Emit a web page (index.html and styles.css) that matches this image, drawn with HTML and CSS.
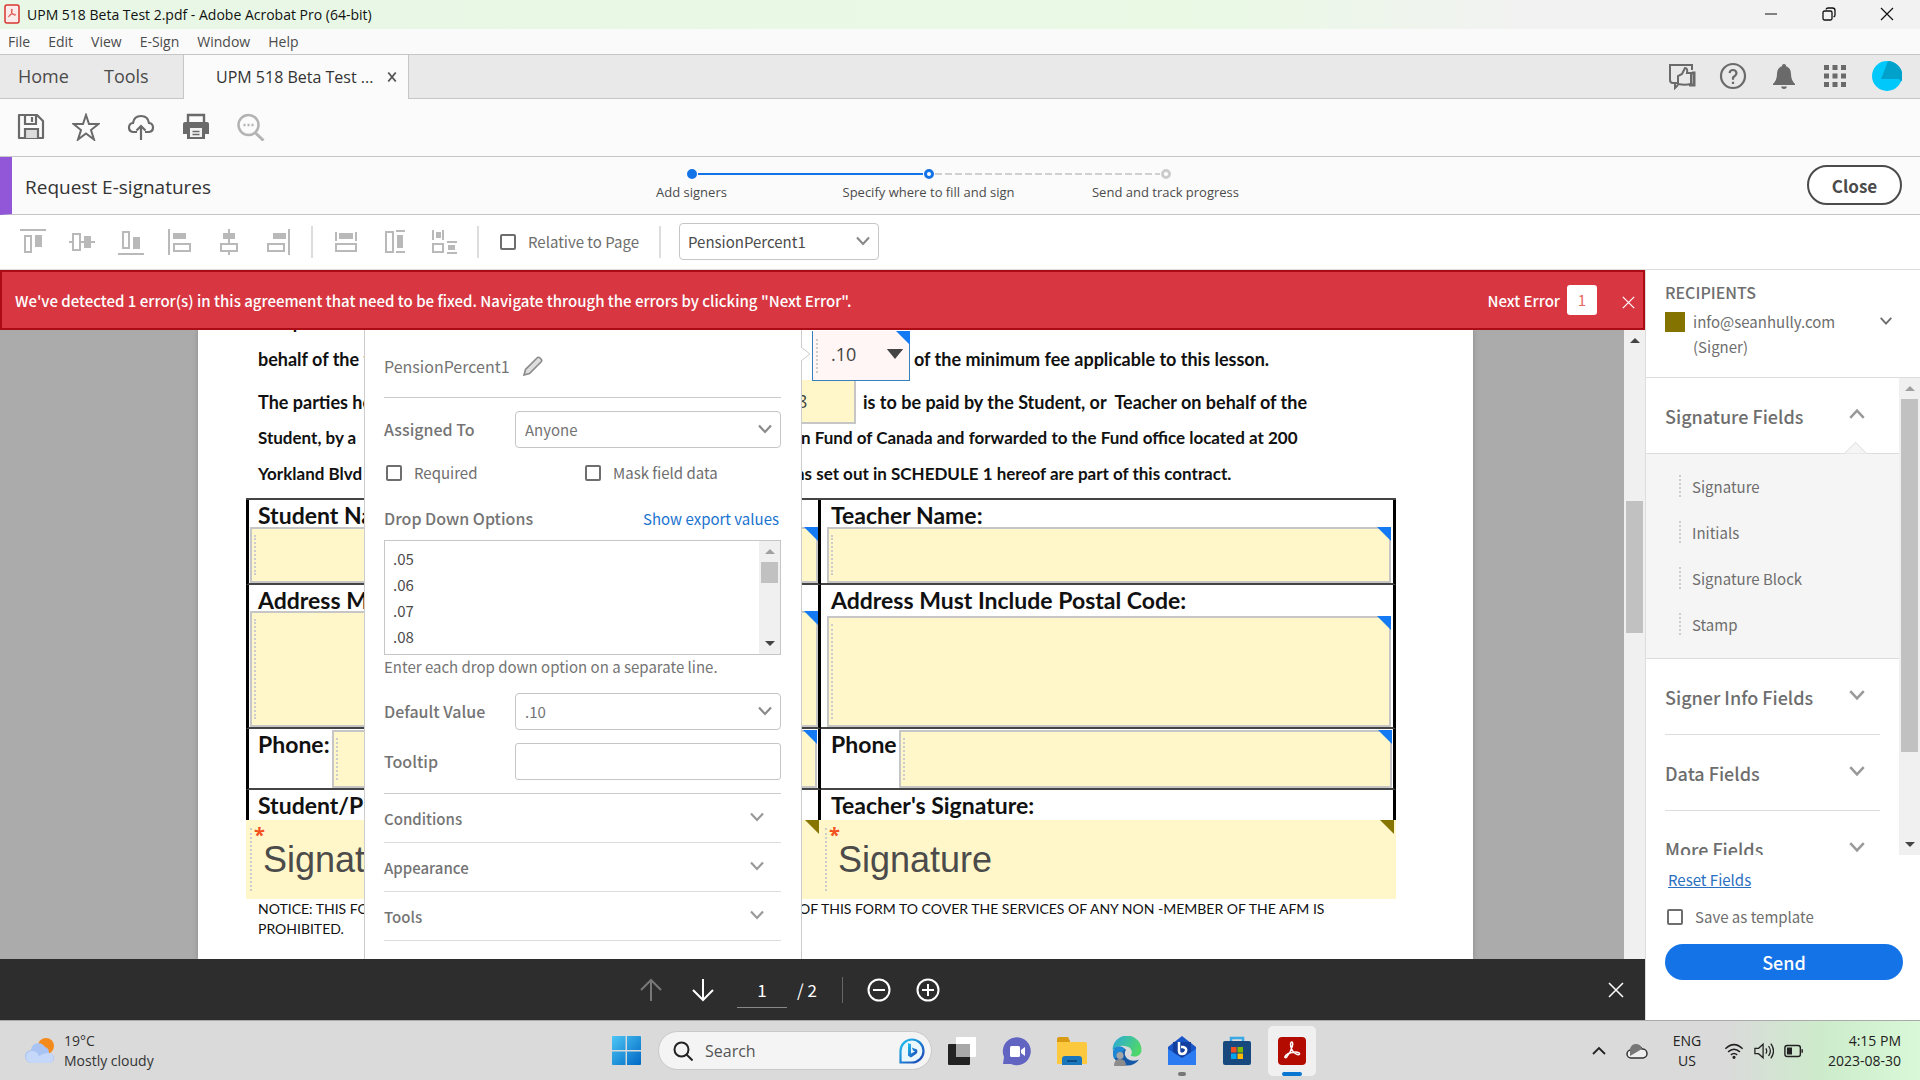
FILE: index.html
```html
<!DOCTYPE html>
<html lang="en">
<head>
<meta charset="utf-8">
<title>UPM 518 Beta Test 2.pdf - Adobe Acrobat Pro (64-bit)</title>
<link rel="stylesheet" href="styles.css">
</head>
<body>
<svg class="defs" aria-hidden="true">
  <symbol id="chev" viewBox="0 0 16 16"><path d="M2 4.500l6 6.500 6-6.500" fill="none" stroke="currentColor" stroke-width="2.200"/></symbol>
  <symbol id="cross" viewBox="0 0 16 16"><path d="M1 1l14 14M15 1L1 15" fill="none" stroke="currentColor" stroke-width="1.500"/></symbol>
  <symbol id="trefoil" viewBox="0 0 20 20"><path d="M3 16.500c1-2 3.500-3.300 6.500-4 3-.7 6-.6 7.500.3 1.200.9.200 2.200-1.700 1.700-2.800-.8-5.800-4.300-6.600-8.500-.4-2.600.2-4.200 1.100-4s1.300 1.800.5 4.400C9.300 10 7 14.300 4.700 17c-1 1.100-2.300.8-1.700-.5z" fill="none" stroke="currentColor" stroke-width="1.500"/></symbol>
</svg>

<header class="titlebar">
  <svg class="app-icon" viewBox="0 0 16 20"><rect x="1" y="1" width="14" height="18" rx="2" fill="#fbeceb" stroke="#d8362f" stroke-width="1.500"/><g color="#d8362f"><use href="#trefoil" x="3" y="4" width="10" height="10"/></g></svg>
  <h1>UPM 518 Beta Test 2.pdf - Adobe Acrobat Pro (64-bit)</h1>
  <div class="win-controls">
    <button aria-label="Minimize"><svg viewBox="0 0 14 14"><path d="M1 7h12" stroke="#111"/></svg></button>
    <button aria-label="Restore"><svg viewBox="0 0 14 14" fill="none" stroke="#111" stroke-width="1.300"><rect x="1" y="4" width="9" height="9" rx="1.500"/><path d="M4 2.500Q4.500 1 6 1h4.500Q13 1 13 3.500V8q0 1.500-1.500 2"/></svg></button>
    <button aria-label="Close window"><svg viewBox="0 0 14 14"><path d="M1 1l12 12M13 1L1 13" stroke="#111" stroke-width="1.200"/></svg></button>
  </div>
</header>

<nav class="menubar" aria-label="Menu">
  <a href="#">File</a><a href="#">Edit</a><a href="#">View</a><a href="#">E-Sign</a><a href="#">Window</a><a href="#">Help</a>
</nav>

<div class="tabs">
  <a class="tab-home" href="#">Home</a>
  <a class="tab-tools" href="#">Tools</a>
  <div class="tab-doc"><span>UPM 518 Beta Test ...</span><button aria-label="Close tab"><svg viewBox="0 0 16 16"><path d="M3 2l10 12M13 2L3 14" stroke="#555" stroke-width="2.500"/></svg></button></div>
  <div class="tab-icons">
    <button aria-label="Feedback"><svg viewBox="0 0 28 28" fill="none" stroke="#6a6a6a" stroke-width="2"><path d="M9 21H5q-3 0-3-3V3h22v5M7 21v5l3-3"/><path d="M10 22V14l4-2 3-6q3 0 2 5h4v11q-6 1.500-13 0z"/><path d="M24 11h2v12h-5" stroke-width="3"/></svg></button>
    <button aria-label="Help"><svg viewBox="0 0 28 28" fill="none" stroke="#6a6a6a" stroke-width="2.200"><circle cx="14" cy="14" r="12"/><path d="M10.500 11q.5-3 3.500-3t3.500 3q0 2-2 3.200T14 17v.8M14 19.800v2.200"/></svg></button>
    <button aria-label="Notifications"><svg viewBox="0 0 28 28" fill="#6a6a6a"><path d="M14 2q2 0 2.200 2.200Q21 6 21 12q0 6 4 10v1H3v-1q4-4 4-10 0-6 4.800-7.800Q12 2 14 2zM11 24.500h6q-.5 2.500-3 2.500t-3-2.500z"/></svg></button>
    <button aria-label="Apps"><svg viewBox="0 0 28 28" fill="#6a6a6a"><path d="M3 3h5v5H3zM11.500 3h5v5h-5zM20 3h5v5h-5zM3 11.500h5v5H3zM11.500 11.500h5v5h-5zM20 11.500h5v5h-5zM3 20h5v5H3zM11.500 20h5v5h-5zM20 20h5v5h-5z"/></svg></button>
    <button aria-label="Account"><svg class="avatar" viewBox="0 0 30 30"><circle cx="15" cy="15" r="15" fill="#00c8fa"/><path d="M16 0A15 15 0 0 1 29.500 20.500L27 18H9z" fill="#00a2cc"/></svg></button>
  </div>
</div>

<div class="toolbar">
  <button aria-label="Save"><svg viewBox="0 0 28 28" fill="none" stroke="#6a6a6a" stroke-width="2.200"><path d="M2 2h18l6 6v17H2z" stroke-linejoin="round"/><path d="M8 2v9h11V2M15 4v5"/><path d="M8 25v-9h13v9" fill="#dcdcdc"/></svg></button>
  <button aria-label="Star"><svg viewBox="0 0 28 28" fill="none" stroke="#6a6a6a" stroke-width="2"><path d="M14 2l3 9h9.500l-7.500 6 3 9.500-8-6-8 6 3-9.500-7.500-6H11z"/></svg></button>
  <button aria-label="Upload"><svg viewBox="0 0 28 28" fill="none" stroke="#6a6a6a" stroke-width="2.200"><path d="M10 19H6q-4-.5-4-4.500T6 10q1-7 8-7t8 7q4 .5 4 4.500T22 19h-4M14 27V13M9.500 17.500L14 13l4.500 4.500"/></svg></button>
  <button aria-label="Print"><svg viewBox="0 0 28 28" fill="#6a6a6a"><path d="M6 9V2h16v7" fill="none" stroke="#6a6a6a" stroke-width="2.400"/><path d="M3 9h22q2 0 2 2v10h-4v5H5v-5H1V11q0-2 2-2z"/><path d="M8 15h12v9H8z" fill="#f3f3f3"/><path d="M10.500 18.500h7M10.500 21.500h7" stroke="#6a6a6a" stroke-width="1.500"/></svg></button>
  <button aria-label="Find"><svg viewBox="0 0 28 28" fill="none" stroke="#b3b3b3" stroke-width="2.500"><circle cx="11.500" cy="12" r="10"/><path d="M18.500 20l8 7.500" stroke-width="3"/><path d="M6.500 12h2M10.500 12h2M14.500 12h2"/></svg></button>
</div>

<div class="request">
  <h2>Request E-signatures</h2>
  <ol class="steps">
    <li class="step done"><i></i><span>Add signers</span></li>
    <li class="step now"><i></i><span>Specify where to fill and sign</span></li>
    <li class="step"><i></i><span>Send and track progress</span></li>
  </ol>
  <button class="close-btn">Close</button>
</div>

<div class="alignbar">
  <div class="align-group">
    <button aria-label="Align top"><svg viewBox="0 0 26 26"><path d="M0 1h26" /><rect x="5" y="7" width="6" height="16"/><rect class="f" x="15" y="6" width="7" height="12"/></svg></button>
    <button aria-label="Align middle"><svg viewBox="0 0 26 26"><path d="M0 13h4M10 13h16"/><rect x="4" y="5" width="7" height="16"/><rect class="f" x="15" y="7" width="7" height="12"/></svg></button>
    <button aria-label="Align bottom"><svg viewBox="0 0 26 26"><path d="M0 25h26"/><rect x="5" y="3" width="6" height="16"/><rect class="f" x="15" y="8" width="7" height="12"/></svg></button>
    <button aria-label="Align left"><svg viewBox="0 0 26 26"><path d="M2 0v26"/><rect class="f" x="6" y="4" width="13" height="6"/><rect x="7" y="15" width="16" height="7"/></svg></button>
    <button aria-label="Align center"><svg viewBox="0 0 26 26"><path d="M13 0v15M13 22v4"/><rect class="f" x="7" y="4" width="12" height="6"/><rect x="5" y="15" width="16" height="7"/></svg></button>
    <button aria-label="Align right"><svg viewBox="0 0 26 26"><path d="M24 0v26"/><rect class="f" x="8" y="4" width="13" height="6"/><rect x="3" y="15" width="16" height="7"/></svg></button>
  </div>
  <div class="align-group">
    <button aria-label="Match width"><svg viewBox="0 0 26 26"><path d="M3 3v9M23 3v9"/><rect class="f" x="6" y="4" width="14" height="6"/><rect x="3" y="15" width="20" height="7"/></svg></button>
    <button aria-label="Match height"><svg viewBox="0 0 26 26"><rect x="4" y="3" width="7" height="20"/><rect class="f" x="15" y="6" width="6" height="13"/><path d="M14 2h9M14 23h9"/></svg></button>
    <button aria-label="Match both"><svg viewBox="0 0 26 26"><path d="M2 1v10M12 1v10M16 13h10M16 24h10"/><rect class="f" x="5" y="3" width="5" height="6"/><rect x="2" y="15" width="10" height="8"/><rect class="f" x="17" y="16" width="7" height="5"/></svg></button>
  </div>
  <label class="check relative"><input type="checkbox"><span>Relative to Page</span></label>
  <div class="select field-select"><select aria-label="Field"><option>PensionPercent1</option></select><svg><use href="#chev"/></svg></div>
</div>

<div class="workspace">
  <main>
    <div class="error" role="alert">
      <span>We've detected 1 error(s) in this agreement that need to be fixed. Navigate through the errors by clicking "Next Error".</span>
      <button class="next">Next Error <b>1</b></button>
      <button class="dismiss" aria-label="Dismiss"><svg><use href="#cross"/></svg></button>
    </div>

    <div class="viewer">
      <section class="page">
        <div class="line l0">The p</div>
        <div class="line l1"><span class="lead">behalf of the t</span>
          <div class="pdf-select"><select aria-label="Pension percent"><option>.10</option></select><svg viewBox="0 0 18 11"><path d="M0 0h18l-9 11z" fill="#444"/></svg></div>
          <span>of the minimum fee applicable to this lesson.</span></div>
        <div class="line l2"><span class="lead">The parties he</span><input class="pdf-input amount" aria-label="Amount" value="8"><span>is to be paid by the Student, or &nbsp;Teacher on behalf of the</span></div>
        <div class="line l3"><span class="lead">Student, by a</span><span>n Fund of Canada and forwarded to the Fund office located at 200</span></div>
        <div class="line l4"><span class="lead">Yorkland Blvd</span><span>ns set out in SCHEDULE 1 hereof are part of this contract.</span></div>

        <div class="form">
          <div class="cell name"><label for="sn">Student Na</label><div class="fld"><input id="sn"></div></div>
          <div class="cell name"><label for="tn">Teacher Name:</label><div class="fld"><input id="tn"></div></div>
          <div class="cell addr"><label for="sa">Address M</label><div class="fld"><input id="sa"></div></div>
          <div class="cell addr"><label for="ta">Address Must Include Postal Code:</label><div class="fld"><input id="ta"></div></div>
          <div class="cell phone"><label for="sp">Phone:</label><div class="fld"><input id="sp"></div></div>
          <div class="cell phone"><label for="tp">Phone</label><div class="fld"><input id="tp"></div></div>
          <div class="cell sig"><label for="ss">Student/P</label></div>
          <div class="cell sig"><label for="ts">Teacher's Signature:</label></div>
          <div class="sigfield"><span class="star">*</span><button id="ss">Signature</button></div>
          <div class="sigfield"><span class="star">*</span><button id="ts">Signature</button></div>
        </div>
        <div class="notice"><span>NOTICE: THIS FO</span><span>OF THIS FORM TO COVER THE SERVICES OF ANY NON -MEMBER OF THE AFM IS</span></div>
        <div class="notice"><span>PROHIBITED.</span></div>
      </section>

      <form class="popup">
        <svg class="pointer" viewBox="0 0 10 16"><path d="M0 1l9 7-9 7" fill="#fff" stroke="#ccc"/></svg>
        <div class="pop-head"><span>PensionPercent1</span><button type="button" aria-label="Rename"><svg viewBox="0 0 20 20" fill="#ddd" stroke="#8a8a8a" stroke-width="1.600"><path d="M1 19l1.500-5.500L14 2q1.500-1.500 3 0l1 1q1.500 1.500 0 3L6.500 17.500z"/></svg></button></div>
        <div class="row"><label for="assign">Assigned To</label><div class="select"><select id="assign"><option>Anyone</option></select><svg><use href="#chev"/></svg></div></div>
        <div class="checks"><label class="check"><input type="checkbox"><span>Required</span></label><label class="check"><input type="checkbox"><span>Mask field data</span></label></div>
        <div class="opt-head"><label for="opts">Drop Down Options</label><a href="#">Show export values</a></div>
        <div class="options">
          <textarea id="opts">.05
.06
.07
.08</textarea>
          <div class="vscroll off-up"><i class="up"></i><i class="thumb"></i><i class="down"></i></div>
        </div>
        <p class="hint">Enter each drop down option on a separate line.</p>
        <div class="row second"><label for="def">Default Value</label><div class="select"><select id="def"><option>.10</option></select><svg><use href="#chev"/></svg></div></div>
        <div class="row last"><label for="tip">Tooltip</label><input id="tip" type="text"></div>
        <button type="button" class="acc">Conditions<svg><use href="#chev"/></svg></button>
        <button type="button" class="acc">Appearance<svg><use href="#chev"/></svg></button>
        <button type="button" class="acc">Tools<svg><use href="#chev"/></svg></button>
      </form>
      <div class="vscroll doc-scroll"><i class="up"></i><i class="thumb"></i></div>
    </div>

    <div class="pager">
      <div class="pager-tools">
        <button aria-label="Previous page"><svg viewBox="0 0 24 24" fill="none" stroke="#777" stroke-width="2"><path d="M12 23V2M2 12L12 2l10 10"/></svg></button>
        <button aria-label="Next page"><svg viewBox="0 0 24 24" fill="none" stroke="#fff" stroke-width="2"><path d="M12 1v21M2 12l10 10 10-10"/></svg></button>
        <input aria-label="Page" value="1"><span>/ 2</span><i class="sep"></i>
        <button aria-label="Zoom out"><svg viewBox="0 0 24 24" fill="none" stroke="#fff" stroke-width="2"><circle cx="12" cy="12" r="10.500"/><path d="M6 12h12"/></svg></button>
        <button aria-label="Zoom in"><svg viewBox="0 0 24 24" fill="none" stroke="#fff" stroke-width="2"><circle cx="12" cy="12" r="10.500"/><path d="M6 12h12M12 6v12"/></svg></button>
      </div>
      <button class="pager-close" aria-label="Close toolbar"><svg><use href="#cross"/></svg></button>
    </div>
  </main>

  <aside>
    <div class="recipients">
      <h3>RECIPIENTS</h3>
      <button class="recipient"><i class="swatch"></i><span>info@seanhully.com<br>(Signer)</span><svg><use href="#chev"/></svg></button>
    </div>
    <div class="panel-scroll">
      <div class="panel">
        <button class="group open">Signature Fields<svg><use href="#chev"/></svg></button>
        <ul class="sub"><li>Signature</li><li>Initials</li><li>Signature Block</li><li>Stamp</li></ul>
        <button class="group">Signer Info Fields<svg><use href="#chev"/></svg></button>
        <button class="group">Data Fields<svg><use href="#chev"/></svg></button>
        <button class="group">More Fields<svg><use href="#chev"/></svg></button>
      </div>
      <div class="vscroll off-up"><i class="up"></i><i class="thumb"></i><i class="down"></i></div>
    </div>
    <div class="actions">
      <a href="#">Reset Fields</a>
      <label class="check"><input type="checkbox"><span>Save as template</span></label>
      <button class="send">Send</button>
    </div>
  </aside>
</div>

<footer class="taskbar">
  <button class="weather"><svg viewBox="0 0 30 26"><circle cx="21" cy="8" r="8" fill="#f58a1c"/><path d="M7 25a6.500 6.500 0 0 1-1-13A7.500 7.500 0 0 1 20 9a6 6 0 0 1 4 6 5 5 0 0 1 0 10z" fill="#a9c3f2"/><path d="M7 25a6 6 0 0 1 0-12q5 0 7 5 4-3 9-3a5 5 0 0 1 1 10z" fill="#c5d8fa"/></svg><span>19°C<br>Mostly cloudy</span></button>
  <div class="apps">
    <button aria-label="Start" class="start"><svg viewBox="0 0 30 30"><defs><linearGradient id="w" x2="1" y2="1"><stop stop-color="#4cc6f5"/><stop offset="1" stop-color="#0067c4"/></linearGradient></defs><path d="M0 1q0-1 1-1h13v14.500H0zM15.500 0H29q1 0 1 1v13.500H15.500zM0 16h14v14H1q-1 0-1-1zM15.500 16H30v13q0 1-1 1H15.500z" fill="url(#w)"/></svg></button>
    <label class="search"><svg viewBox="0 0 20 20" fill="none" stroke="#222" stroke-width="2"><circle cx="8.500" cy="8.500" r="7"/><path d="M13.500 13.500l6 6"/></svg><input type="text" placeholder="Search"><svg class="bing" viewBox="0 0 26 26"><defs><linearGradient id="b" x2="1" y2="1"><stop stop-color="#22c3f0"/><stop offset="1" stop-color="#1d3fb3"/></linearGradient></defs><path d="M1.500 24.500V13a11.500 11.500 0 1 1 11.500 11.500z" fill="#eaf7fd" stroke="url(#b)" stroke-width="2.200"/><path d="M9 5l3 1.200v9.300l4-2-2-1-1.200-3L18 11.500q1 3-1 4.500l-5 3.500-3-1.800z" fill="url(#b)"/></svg></label>
    <div class="pins">
      <button aria-label="Task view"><svg viewBox="0 0 30 30"><rect x="1" y="8" width="22" height="21" rx="1" fill="#222"/><rect x="9" y="1" width="20" height="20" rx="1" fill="#fff"/><path d="M9 8h14v13H9z" fill="#a8a8a8"/></svg></button>
      <button aria-label="Chat"><svg viewBox="0 0 30 30"><path d="M1 28l1-7A14 14 0 1 1 9 28z" fill="#6264c2"/><rect x="8" y="10" width="10" height="11" rx="1.500" fill="#fff"/><path d="M19 14l4-3v9l-4-3z" fill="#fff"/></svg></button>
      <button aria-label="Explorer"><svg viewBox="0 0 30 30"><path d="M0 3q0-2 2-2h9l2 4v4H0z" fill="#d99a14"/><path d="M0 6h28q2 0 2 2v20H0z" fill="#fcc93e"/><path d="M5 23q0-3 3-3h14q3 0 3 3v6H5z" fill="#1a76bd"/><path d="M10 24h10v2H10z" fill="#0d4f85"/></svg></button>
      <button aria-label="Edge"><svg viewBox="0 0 30 30"><defs><linearGradient id="eg" x2="1" y2=".4"><stop stop-color="#2aa8e0"/><stop offset="1" stop-color="#4fd66b"/></linearGradient></defs><path d="M1 15Q1 28 15 29.500q8 0 12-6-7 3-12-1-4-4-1-9-7-4-13 1.500z" fill="#1558a8"/><path d="M0.500 14A14.500 14.500 0 0 1 29.500 14c0 6-7 8-11 5.500 2-2 2-5-1-8Q9 7 .500 14z" fill="url(#eg)"/><path d="M2 12q7-4 11 1-4 4-1 9-8-2-10 1-2-6 0-11z" fill="#1e86d2"/><circle cx="8" cy="19.500" r="3.500" fill="#a5a5a5"/><path d="M2 30q0-7 6-7t6 7z" fill="#8c8c8c"/></svg></button>
      <button aria-label="Mail" class="running"><svg viewBox="0 0 30 30"><path d="M1 11L15 0l14 11v18H1z" fill="#1a55c8"/><path d="M6 6h18v12l-9 6-9-6z" fill="#123f9f"/><path d="M1 13l14 9 14-9v16H1z" fill="#2d7bf0"/><path d="M12 6v9q0 3 3 3t4-3-3-4h-2" fill="none" stroke="#fff" stroke-width="2.500"/></svg></button>
      <button aria-label="Store"><svg viewBox="0 0 30 30"><path d="M9 6V2h12v4" fill="none" stroke="#38a9e6" stroke-width="2.500"/><rect x="1" y="5" width="28" height="24" rx="2" fill="#17497f"/><path d="M9 11h5.500v5.500H9z" fill="#f25022"/><path d="M15.500 11H21v5.500h-5.500z" fill="#7fba00"/><path d="M9 17.500h5.500V23H9z" fill="#00a4ef"/><path d="M15.500 17.500H21V23h-5.500z" fill="#ffb900"/></svg></button>
      <button aria-label="Acrobat" class="active"><svg viewBox="0 0 30 30"><rect x="1" y="1" width="28" height="28" rx="4" fill="#b30b00"/><g color="#fff"><use href="#trefoil" x="5" y="4" width="20" height="20"/></g></svg></button>
    </div>
  </div>
  <div class="tray">
    <svg class="tray-up" viewBox="0 0 16 16"><path d="M2 11l6-6 6 6" fill="none" stroke="#222" stroke-width="1.800"/></svg>
    <svg class="cloud" viewBox="0 0 22 16"><path d="M5 15a4 4 0 0 1 0-8A6 6 0 0 1 16 6a4.500 4.500 0 0 1 1 9z" fill="#eee" stroke="#333" stroke-width="1.500"/><path d="M4 8a6 6 0 0 1 12-2L4 13z" fill="#777"/></svg>
    <span class="lang">ENG<br>US</span>
    <svg class="wifi" viewBox="0 0 22 18" fill="none" stroke="#222" stroke-width="1.600"><path d="M1.500 6.500Q11-2.500 20.500 6.500M4.500 10Q11 4 17.500 10M7.500 13.300q3.500-3 7 0"/><circle cx="11" cy="16" r="1" fill="#222"/></svg>
    <svg class="vol" viewBox="0 0 22 18" fill="none" stroke="#222" stroke-width="1.400"><path d="M1 6h4l5-4.500v15L5 12H1zM13 6q2 3 0 6M16 3.500q4 5.500 0 11M18.500 1q6 8 0 16"/></svg>
    <svg class="bat" viewBox="0 0 22 18" fill="none" stroke="#222" stroke-width="1.600"><rect x="1" y="3" width="17" height="12" rx="2.500"/><path d="M20 7v4"/><path d="M4 6h4v6H4z" fill="#222"/></svg>
    <span class="clock">4:15 PM<br>2023-08-30</span>
  </div>
</footer>
</body>
</html>
```
FILE: styles.css
```css
* { box-sizing: border-box; }
body { margin: 0; min-height: 100vh; display: flex; flex-direction: column; font-family: "Noto Sans CJK SC", "Noto Sans", sans-serif; font-size: 15px; color: #4b4b4b; background: #fff; overflow-x: hidden; }
button { font: inherit; color: inherit; background: none; border: 0; padding: 0; margin: 0; text-align: left; }
input, select, textarea { font: inherit; color: inherit; margin: 0; }
a { color: inherit; text-decoration: none; }
svg { display: block; flex: none; width: 16px; height: 16px; }
i { display: block; }
.defs { position: absolute; width: 0; height: 0; }

/* window chrome */
.titlebar { height: 29px; display: flex; align-items: center; gap: 7px; padding: 0 26px 1px 4px; font-family: "Open Sans", sans-serif; color: #111; background: linear-gradient(90deg, #e8f7e6 0, #e9f9e4 62%, #f2f2f2 80%); }
.titlebar h1 { flex: 1; margin: 0; font-size: 14px; font-weight: 400; }
.titlebar .app-icon { height: 20px; }
.win-controls { display: flex; gap: 44px; }
.win-controls svg { width: 14px; height: 14px; }
.menubar { height: 25px; display: flex; align-items: center; gap: 18px; padding-left: 8px; background: #fafafa; font: 14px "Open Sans", sans-serif; }
.tabs { height: 45px; display: flex; align-items: stretch; background: #e9e9e9; border: solid #c6c6c6; border-width: 1px 0; font: 18px/42px "Open Sans", sans-serif; }
.tab-home { padding-left: 18px; width: 104px; }
.tab-tools { width: 79px; }
.tab-doc { display: flex; align-items: center; justify-content: space-between; width: 226px; padding: 0 10px 0 32px; margin-bottom: -1px; background: #fbfbfb; border: solid #c6c6c6; border-width: 0 1px; font-size: 16px; color: #333; }
.tab-doc svg { width: 12px; height: 12px; }
.tab-icons { margin-left: auto; display: flex; align-items: center; gap: 23px; padding: 0 18px 1px 0; }
.tab-icons svg { width: 28px; height: 28px; }
.tab-icons .avatar { width: 30px; height: 30px; }
.toolbar { height: 58px; display: flex; align-items: center; gap: 27px; padding: 0 0 2px 17px; background: #fbfbfb; border-bottom: 1px solid #c6c6c6; }
.toolbar svg { width: 28px; height: 28px; }

/* request e-signatures header */
.request { height: 58px; display: flex; align-items: center; justify-content: space-between; padding: 0 18px 1px 0; background: #fbfbfb; border-left: 12px solid #9256d9; border-bottom: 1px solid #c6c6c6; font-family: "Open Sans", sans-serif; }
.request h2 { width: 568px; margin: 0; padding: 3px 0 0 13px; font-size: 19px; font-weight: 400; color: #333; }
.steps { display: grid; grid-template-columns: repeat(3, 237px); margin: 0 auto 0 -7px; padding: 0; list-style: none; font-size: 13px; line-height: 18px; }
.step { position: relative; display: flex; flex-direction: column; align-items: center; gap: 4px; white-space: nowrap; }
.step i { width: 10px; height: 10px; border: 3px solid #ccc; border-radius: 50%; background: #fff; z-index: 1; }
.step.done i, .step.now i { border-color: #1473e6; }
.step.done i { background: #1473e6; }
.step:not(:last-child)::after { content: ""; position: absolute; top: 4px; left: calc(50% + 6px); width: calc(100% - 12px); height: 2px; background: repeating-linear-gradient(90deg, #d0d0d0 0 7px, transparent 7px 10px); }
.step.done::after { background: #1473e6; }
.close-btn { width: 95px; height: 40px; border: 2px solid #4b4b4b; border-radius: 20px; background: #fff; text-align: center; font: 700 17px "Noto Sans CJK SC", sans-serif; }

.alignbar { height: 55px; display: flex; align-items: center; padding-bottom: 1px; border-bottom: 1px solid #ddd; }
.align-group { display: flex; gap: 23px; height: 32px; align-items: center; border-right: 2px solid #ddd; padding: 0 20px; }
.align-group svg { width: 26px; height: 26px; fill: none; stroke: #b9b9b9; stroke-width: 2; }
.align-group .f { fill: #b9b9b9; stroke: none; }
.check { display: flex; align-items: center; gap: 12px; color: #6e6e6e; line-height: 24px; }
.check input { appearance: none; flex: none; width: 16px; height: 16px; border: 2px solid #6e6e6e; border-radius: 2px; background: #fff; }
.relative { height: 32px; padding: 0 18px 0 21px; border-right: 2px solid #ddd; width: 182px; white-space: nowrap; }
.select { position: relative; height: 37px; }
.select select { appearance: none; width: 100%; height: 100%; padding: 0 9px; border: 1px solid #c6c6c6; border-radius: 4px; background: #fff; }
.select svg { position: absolute; right: 8px; top: 10px; color: #8a8a8a; pointer-events: none; }
.field-select { width: 200px; margin-left: 18px; }
.field-select select { padding-left: 8px; }

/* workspace */
.workspace { flex: 1; display: flex; }
main { flex: 1; min-width: 0; display: flex; flex-direction: column; }
.error { height: 60px; display: flex; align-items: center; padding: 0 8px 0 13px; color: #fff; background: #d83742; border: 2px solid #ab0b14; font-weight: 500; }
.error span { flex: 1; }
.next { display: flex; align-items: center; gap: 7px; }
.next b { width: 30px; height: 30px; border-radius: 3px; background: #fff; color: #e8685f; text-align: center; font-weight: 400; line-height: 30px; }
.dismiss { margin: 4px 0 0 25px; }
.dismiss svg { width: 13px; height: 13px; }
.viewer { position: relative; flex: 1; display: flex; background: #ababab; overflow: hidden; }
.page { flex: 1; min-width: 0; margin: 0 151px 0 198px; padding: 0 77px 16px 48px; background: #fff; box-shadow: 0 0 5px #888; overflow: hidden; color: #111; }
.vscroll { width: 21px; display: flex; flex-direction: column; align-items: center; gap: 6px; padding: 8px 0; background: #f0f0f0; }
.vscroll .thumb { width: 17px; background: #c1c1c1; }
.vscroll .up { border: solid transparent; border-width: 0 5px 5px; border-bottom-color: #444; }
.vscroll .down { margin-top: auto; border: solid transparent; border-width: 5px 5px 0; border-top-color: #444; }
.off-up .up { border-bottom-color: #a0a0a0; }
.doc-scroll .thumb { height: 132px; margin-top: 152px; }

.line { display: flex; align-items: center; padding-left: 12px; font: 700 18px "Lato", sans-serif; white-space: nowrap; }
.lead { flex: none; width: 554px; }
.l0 { height: 20px; margin-top: -18px; }
.l1 { height: 48px; gap: 4px; }
.l1 > span { padding-top: 5px; }
.l2 { height: 44px; gap: 7px; }
.l2 .lead { width: 484px; }
.l3, .l4 { font-size: 17px; }
.l3 { height: 26px; }
.l3 .lead { width: 543px; }
.l4 { height: 48px; padding-bottom: 2px; }
.l4 .lead { width: 537px; }
.pdf-select { position: relative; flex: none; width: 98px; height: 50px; margin-left: -4px; }
.pdf-select select { appearance: none; width: 100%; height: 100%; padding: 0 18px 4px; border: 1px solid #3a80bb; border-top: 0; background: #fff6f5; font: 18px "Open Sans", sans-serif; color: #444; }
.pdf-select svg { position: absolute; right: 6px; top: 18px; width: 18px; height: 10px; }
.amount { width: 107px; height: 44px; padding: 0 0 0 46px; border: 2px solid #c6c6c6; border-top: 0; background: #fff6c9; font: 18px "Open Sans", sans-serif; color: #444; }
.fld::after, .pdf-select::after, .sigfield::after { content: ""; position: absolute; top: 0; right: 0; width: 14px; height: 14px; background: #147af3; clip-path: polygon(0 0, 100% 0, 100% 100%); }
.fld::before, .pdf-select::before, .sigfield::before { content: ""; position: absolute; z-index: 1; left: 4px; top: 8px; bottom: 8px; border-left: 2px dotted #ccc; }

.form { display: grid; grid-template-columns: 1fr 1fr; border-top: 2px solid #444; }
.cell { display: flex; flex-direction: column; font: 700 23px/30px "Lato", sans-serif; border-right: 3px solid #000; border-bottom: 2px solid #444; }
.cell:nth-child(odd) { border-left: 3px solid #000; }
.cell label { padding-left: 10px; white-space: nowrap; }
.cell:nth-child(odd) label { padding-left: 9px; }
.fld { position: relative; flex: 1; margin: 0 2px 0 6px; }
.cell:nth-child(odd) .fld { margin: 0 0 0 1px; }
.fld input { display: block; width: 100%; height: 100%; border: 2px solid #c6c6c6; background: #fff6c9; }
.name { height: 85px; }
.name label { height: 27px; }
.addr { height: 144px; }
.addr label { height: 31px; }
.addr:nth-child(odd) label { height: 26px; }
.phone { height: 61px; flex-direction: row; }
.phone .fld, .phone:nth-child(odd) .fld { margin: 1px 1px 0 2px; }
.sig { height: 30px; border-bottom: 0; }
.sigfield { position: relative; height: 79px; padding: 20px 0 0 17px; background: #fff6c9; font: 36px/40px "Liberation Sans", sans-serif; color: #4b4b4b; }
.sigfield::after { right: 2px; background: #867500; }
.star { position: absolute; left: 8px; top: 1px; font: 700 20px/28px "Open Sans", sans-serif; color: #f4511e; }
.notice { display: flex; padding-left: 12px; font: 14px/20px "Lato", sans-serif; white-space: nowrap; }
.notice span:first-child { width: 541px; }

/* field properties pop-up */
.popup { position: absolute; left: 364px; top: 0; bottom: 0; width: 438px; padding: 0 20px 0 19px; background: #fff; border: 1px solid #ccc; border-width: 0 1px; color: #747474; line-height: 24px; }
.pointer { position: absolute; left: 436px; top: 16px; width: 10px; }
.pop-head { display: flex; align-items: center; gap: 13px; height: 68px; padding-top: 4px; border-bottom: 1px solid #ccc; font-size: 16px; }
.pop-head svg { width: 20px; height: 20px; }
.row { display: grid; grid-template-columns: 131px 1fr; align-items: center; margin-top: 13px; font-weight: 500; }
.row label, .opt-head label { font-size: 16px; line-height: 22px; padding-bottom: 2px; }
.row select, .row input { font-weight: 400; }
.row input { height: 37px; border: 1px solid #c6c6c6; border-radius: 3px; }
.checks { display: grid; grid-template-columns: 199px 1fr; margin-top: 13px; padding-left: 2px; }
.opt-head { display: flex; justify-content: space-between; margin-top: 22px; font-weight: 500; }
.opt-head a { color: #1a73cf; font-weight: 400; padding-right: 2px; }
.options { display: flex; height: 115px; margin-top: 9px; border: 1px solid #c6c6c6; }
.options textarea { flex: 1; min-width: 0; padding: 5px 8px; border: 0; resize: none; overflow: hidden; line-height: 26px; color: #4b4b4b; }
.options .thumb { height: 21px; width: 17px; }
.options .vscroll { gap: 8px; }
.hint { margin: 0 0 14px; }
.row.last { padding-bottom: 13px; border-bottom: 1px solid #ccc; }
.acc { display: flex; align-items: center; justify-content: space-between; width: 100%; height: 49px; padding: 1px 16px 0 0; border-bottom: 1px solid #ddd; font-weight: 500; }
.acc svg { margin-top: -3px; color: #999; }

.pager { height: 61px; display: flex; align-items: center; padding-right: 21px; background: #2d2d2d; color: #fff; font-size: 17px; }
.pager-tools { flex: 1; display: flex; align-items: center; justify-content: center; margin-right: 29px; }
.pager-tools svg { width: 24px; height: 24px; }
.pager-tools button { margin: 0 14px; }
.pager-tools button:last-child { margin-left: 11px; }
.pager-tools input { width: 50px; height: 37px; margin: 0 10px 0 8px; text-align: center; background: none; border: 0; border-bottom: 1px solid #888; }
.sep { width: 1px; height: 26px; margin: 0 10px 0 25px; background: #666; }

/* recipients and field panel */
aside { width: 275px; border-left: 1px solid #ddd; display: flex; flex-direction: column; color: #6e6e6e; }
.recipients { height: 108px; padding: 11px 24px 0 19px; border-bottom: 1px solid #ddd; }
.recipients h3 { margin: 0; font-size: 16px; font-weight: 500; line-height: 22px; }
.recipient { display: flex; width: 100%; gap: 8px; line-height: 25px; margin-top: 6px; }
.recipient span { flex: 1; }
.swatch { width: 20px; height: 20px; margin-top: 3px; background: #857300; }
.recipient svg { margin: 5px 3px 0 0; width: 14px; height: 14px; }
.panel-scroll { display: flex; height: 477px; }
.panel { flex: 1; overflow: hidden; font-size: 18px; font-weight: 500; }
.group { display: flex; align-items: center; justify-content: space-between; width: calc(100% - 38px); height: 76px; margin-left: 19px; padding: 0 14px 0 0; border-bottom: 1px solid #ddd; line-height: 24px; }
.group svg { width: 18px; height: 18px; margin-top: -4px; color: #999; }
.group.open { width: 100%; height: 75px; margin: 0; padding: 0 33px 0 19px; border: 0; }
.open svg { rotate: 180deg; }
.sub { position: relative; margin: 0; padding: 9px 0; height: 206px; list-style: none; background: #f5f5f5; border: solid #ddd; border-width: 1px 0; font-size: 15px; font-weight: 400; }
.sub::before { content: ""; position: absolute; right: 35px; top: -9px; width: 16px; height: 16px; background: #f5f5f5; border: solid #ddd; border-width: 1px 0 0 1px; rotate: 45deg; clip-path: polygon(0 0, 100% 0, 0 100%); }
.sub li { display: flex; align-items: center; height: 46px; gap: 11px; padding-left: 33px; }
.sub li::before { content: ""; height: 22px; border-left: 2px dotted #ccc; }
.panel-scroll .thumb { height: 353px; }
.panel-scroll .vscroll { gap: 8px; }
.actions { padding: 13px 17px 39px 19px; }
.actions > a { display: block; width: max-content; margin-left: 3px; line-height: 24px; color: #2a6fc0; text-decoration: underline; }
.actions .check { margin: 13px 0 15px 2px; }
.send { display: block; width: 100%; height: 36px; border-radius: 18px; background: #1473e6; color: #fff; text-align: center; font-size: 18px; font-weight: 500; line-height: 36px; }

/* taskbar */
.taskbar { height: 60px; display: grid; grid-template-columns: 612px 1fr auto; align-items: center; padding-right: 19px; border-top: 1px solid #aaa; background: linear-gradient(90deg, #dadada 90%, #cdeccb 95%, #d9f8d7); font: 14px/20px "Open Sans", sans-serif; color: #222; }
.weather { display: flex; align-items: center; gap: 9px; padding-left: 25px; color: #333; }
.weather svg { width: 30px; height: 26px; }
.apps { display: flex; align-items: center; gap: 17px; }
.start svg { width: 29px; height: 29px; }
.search { display: flex; align-items: center; gap: 10px; width: 274px; height: 39px; padding: 0 6px 0 14px; border: 1px solid #c8c8c8; border-radius: 20px; background: #f4f4f4; font-size: 16px; }
.search svg { width: 20px; height: 20px; }
.search input { flex: 1; min-width: 0; border: 0; background: none; }
.search input::placeholder { color: #555; }
.search .bing { width: 26px; height: 26px; }
.pins { display: flex; gap: 7px; margin-left: -11px; }
.pins button { position: relative; width: 48px; height: 50px; border-radius: 5px; display: flex; align-items: center; justify-content: center; }
.pins svg { width: 30px; height: 30px; }
.pins .active { background: #f0f0f0; }
.running::after, .active::after { content: ""; position: absolute; bottom: 0; width: 8px; height: 4px; border-radius: 2px; background: #777; }
.pins .active::after { width: 20px; background: #0b76d1; }
.tray { display: flex; align-items: center; gap: 10px; }
.tray-up { margin-right: 9px; }
.tray .cloud { width: 22px; margin-right: 9px; }
.lang { width: 40px; text-align: center; margin-right: 7px; }
.tray .wifi, .tray .vol, .tray .bat { width: 20px; height: 18px; }
.clock { text-align: right; margin-left: 14px; }
```
